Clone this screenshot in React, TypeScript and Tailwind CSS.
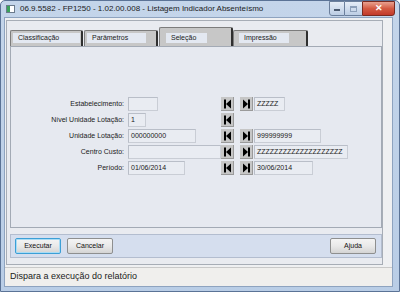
import React from "react";

const font = "font-['Liberation_Sans',Arial,sans-serif]";

function NavFirst() {
  return (
    <div className="w-[13px] h-[14px] bg-[#c6c6c6] border-r border-b border-[#9a9a9a] flex items-center justify-center shrink-0">
      <svg width="9" height="10" viewBox="0 0 9 10">
        <rect x="1" y="0.5" width="2" height="9" fill="#000" />
        <polygon points="8,0.5 8,9.5 3,5" fill="#000" />
      </svg>
    </div>
  );
}
function NavLast() {
  return (
    <div className="w-[13px] h-[14px] bg-[#c6c6c6] border-r border-b border-[#9a9a9a] flex items-center justify-center shrink-0">
      <svg width="9" height="10" viewBox="0 0 9 10">
        <polygon points="1,0.5 1,9.5 6,5" fill="#000" />
        <rect x="6" y="0.5" width="2" height="9" fill="#000" />
      </svg>
    </div>
  );
}

function Field({ w, v }: { w: string; v?: string }) {
  return (
    <div
      className={`${w} h-[14px] bg-[#e9ecf2] border border-[#c9cdd5] border-t-[#b9bec8] border-l-[#b9bec8] text-[7px] leading-[12px] pl-[2px] text-[#1a1a1a] shrink-0 overflow-hidden whitespace-nowrap`}
    >
      {v}
    </div>
  );
}

function Row({
  label,
  left,
  right,
  first = true,
  last = true,
}: {
  label: string;
  left: React.ReactNode;
  right?: React.ReactNode;
  first?: boolean;
  last?: boolean;
}) {
  return (
    <div className="flex items-center h-[14px]">
      <div className="w-[114px] text-right text-[7px] text-[#1a1a1a] pr-[1px] whitespace-nowrap">{label}</div>
      <div className="w-[96px] pl-[3px] flex">{left}</div>
      <div className="flex items-center">
        {first && <NavFirst />}
        {last && <div className="ml-[6px]"><NavLast /></div>}
        {right && <div className="ml-[1px]">{right}</div>}
      </div>
    </div>
  );
}

function Tab({
  label,
  tabW,
  boxW,
  active,
  inset,
}: {
  label: string;
  tabW: string;
  boxW: string;
  active?: boolean;
  inset: string;
}) {
  return (
    <div
      className={`${tabW} ${active ? "h-[19px] pt-[5px]" : "h-[16px] pt-[2px]"} bg-[#c7c7c7] border border-[#7c7c7c] border-r-[#2f2f2f] border-r-[2px] border-b-0 rounded-t-[2px] ${inset} shrink-0`}
    >
      <div className={`${boxW} h-[10px] bg-[#e3e8f1] text-[7px] leading-[10px] pl-[5px] text-[#1a1a1a] whitespace-nowrap`}>
        {label}
      </div>
    </div>
  );
}

function Btn({ label, w, focus }: { label: string; w: string; focus?: boolean }) {
  return (
    <div
      className={`${w} h-[16px] rounded-[2px] border ${
        focus ? "border-[#3c9fd6] shadow-[inset_0_0_0_1px_#a9dcf5]" : "border-[#8e8f8f]"
      } bg-gradient-to-b from-[#f4f4f4] via-[#e9e9e9] to-[#d4d4d4] text-[7px] leading-[14px] text-center text-[#111]`}
    >
      {label}
    </div>
  );
}

export default function App() {
  return (
    <div className={`${font} w-[400px] h-[292px] overflow-hidden flex flex-col bg-gradient-to-b from-[#c4d5ea] to-[#b9cde6] border border-[#5b7396] rounded-t-[5px]`}>
      {/* Title bar */}
      <div className="h-[16px] flex items-start shrink-0">
        <div className="ml-[5px] mt-[4px] w-[9px] h-[8px] bg-white border border-[#6b7a8c] flex">
          <div className="w-[3px] h-full bg-[#3aa35a]" />
        </div>
        <div className="ml-[5px] mt-[2px] text-[8px] leading-[12px] text-[#1b1b1b] whitespace-nowrap">
          06.9.5582 - FP1250 - 1.02.00.008 - Listagem Indicador Absenteísmo
        </div>
        <div className="ml-auto mr-[4px] flex h-[15px]">
          <div className="w-[16px] h-[15px] border border-[#6b7f9c] rounded-bl-[3px] bg-gradient-to-b from-[#e5edf7] to-[#bccde4] flex items-end justify-center pb-[4px]">
            <div className="w-[6px] h-[2px] bg-white border border-[#4b5a70]" />
          </div>
          <div className="w-[17px] h-[15px] border-y border-[#6b7f9c] bg-gradient-to-b from-[#e5edf7] to-[#bccde4] flex items-center justify-center">
            <div className="w-[7px] h-[6px] border border-[#8da0ba] border-t-2" />
          </div>
          <div className="w-[33px] h-[15px] border border-[#7a2a20] rounded-br-[3px] bg-gradient-to-b from-[#e8a190] via-[#d45a43] to-[#c2392a] flex items-center justify-center text-white text-[9px] font-bold leading-none">
            ✕
          </div>
        </div>
      </div>

      {/* Client */}
      <div className="flex-1 ml-[3px] mr-[6px] mb-[4px] bg-[#eff0f2] flex flex-col border border-[#8ea3bf]">
        <div className="mt-[2px] ml-[1px] mr-[9px] h-[245px] border border-[#a7adb6] bg-[#e9ebf0] flex flex-col">
          {/* Tabs */}
          <div className="mt-[6px] ml-[3px] h-[19px] flex items-end">
            <Tab label="Classificação" tabW="w-[73px]" boxW="w-[67px]" inset="pl-[2px]" />
            <div className="w-[1px]" />
            <Tab label="Parâmetros" tabW="w-[74px]" boxW="w-[59px]" inset="pl-[2px]" />
            <div className="w-[1px]" />
            <Tab label="Seleção" tabW="w-[74px]" boxW="w-[41px]" active inset="pl-[6px]" />
            <Tab label="Impressão" tabW="w-[75px]" boxW="w-[50px]" inset="pl-[5px]" />
          </div>
          {/* Panel */}
          <div className="ml-[3px] h-[182px] border border-[#a3aab5] bg-[#e6e9f0] flex flex-col gap-[2px] pt-[50px]">
            <Row label="Estabelecimento:" left={<Field w="w-[30px]" />} right={<Field w="w-[31px]" v="ZZZZZ" />} />
            <Row label="Nível Unidade Lotação:" left={<Field w="w-[18px]" v="1" />} last={false} />
            <Row label="Unidade Lotação:" left={<Field w="w-[68px]" v="000000000" />} right={<Field w="w-[67px]" v="999999999" />} />
            <Row
              label="Centro Custo:"
              left={<Field w="w-[93px]" />}
              right={<Field w="w-[94px]" v="ZZZZZZZZZZZZZZZZZZZZ" />}
            />
            <Row label="Período:" left={<Field w="w-[57px]" v="01/06/2014" />} right={<Field w="w-[59px]" v="30/06/2014" />} />
          </div>
          {/* Buttons */}
          <div className="mt-[6px] ml-[3px] h-[24px] bg-[#d5deee] border border-[#b3bdcf] flex items-center pl-[4px] pr-[5px]">
            <Btn label="Executar" w="w-[46px]" focus />
            <div className="w-[6px]" />
            <Btn label="Cancelar" w="w-[46px]" />
            <div className="ml-auto">
              <Btn label="Ajuda" w="w-[46px]" />
            </div>
          </div>
        </div>
        {/* Status bar */}
        <div className="mt-[2px] flex-1 border-t border-[#c9c9c9] bg-[#f0efed] flex items-center pl-[5px]">
          <span className="text-[9px] text-[#1a1a1a]">Dispara a execução do relatório</span>
        </div>
      </div>
    </div>
  );
}
